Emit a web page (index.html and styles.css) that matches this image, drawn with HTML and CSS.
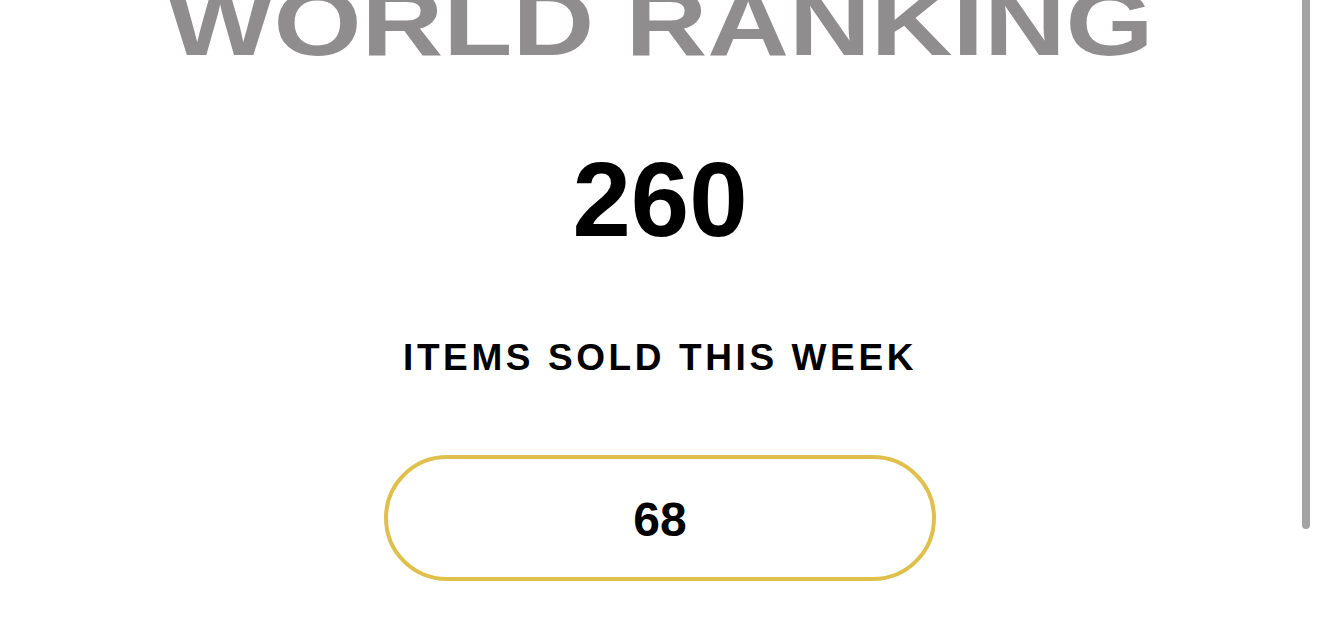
FILE: index.html
```html
<!DOCTYPE html>
<html lang="en">
<head>
  <meta charset="UTF-8" />
  <meta name="viewport" content="width=device-width, initial-scale=1.0"/>
  <title>World Ranking</title>
  <link rel="stylesheet" href="styles.css">
</head>
<body>
  <main class="ranking">
    <h1 class="ranking-title">WORLD RANKING</h1>

    <div class="rank-number">260</div>

    <h2 class="rank-label">ITEMS SOLD THIS WEEK</h2>

    <div class="rank-pill">68</div>
  </main>

  <div class="scroll-thumb"></div>
</body>
</html>
```

FILE: styles.css
```css
:root {
  --text: #000000;
  --title: #8f8d8d;
  --gold: #e0c04c;
  --thumb: #a3a3a3;
}

* {
  box-sizing: border-box;
}

html, body {
  height: 100%;
}

body {
  margin: 0;
  background: #ffffff;
  color: var(--text);
  font-family: 'Liberation Sans', Arial, sans-serif;
  overflow: hidden;
}

.ranking {
  display: flex;
  flex-direction: column;
  align-items: center;
  text-align: center;
}

.ranking-title {
  margin: -23px 0 0;
  height: 92px;
  font-size: 92px;
  line-height: 1;
  font-weight: 700;
  color: var(--title);
  white-space: nowrap;
  transform: scaleX(1.23);
}

.rank-number {
  margin-top: 78px;
  font-size: 105px;
  line-height: 1;
  font-weight: 700;
}

.rank-label {
  margin: 87px 0 0;
  font-size: 37px;
  line-height: 1;
  font-weight: 700;
  letter-spacing: 3.6px;
}

.rank-pill {
  margin-top: 79px;
  width: 552px;
  height: 126px;
  border: 4px solid var(--gold);
  border-radius: 999px;
  display: flex;
  align-items: center;
  justify-content: center;
  padding-top: 3px;
  font-size: 48px;
  font-weight: 700;
}

/* overlay scrollbar thumb */
.scroll-thumb {
  position: fixed;
  top: -8px;
  right: 10px;
  width: 8px;
  height: 537px;
  border-radius: 4px;
  background: var(--thumb);
}
```
